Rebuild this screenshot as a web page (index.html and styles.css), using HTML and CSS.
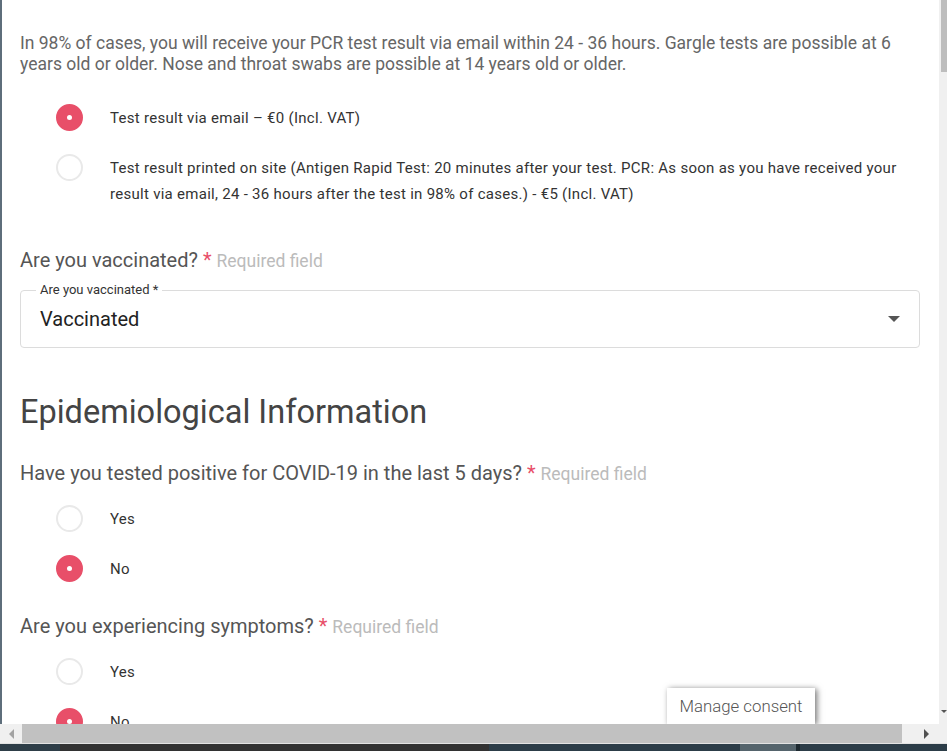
FILE: index.html
```html
<!DOCTYPE html>
<html lang="en">
<head>
    <meta charset="UTF-8">
    <meta name="viewport" content="width=device-width, initial-scale=1.0">
    <title>Test Booking</title>
    <link rel="stylesheet" href="styles.css">
</head>
<body>
    <div class="window">
        <div class="viewport">
            <div class="page">
                <p class="intro">In 98% of cases, you will receive your PCR test result via email within 24 - 36 hours. Gargle tests are possible at 6 years old or older. Nose and throat swabs are possible at 14 years old or older.</p>

                <div class="options first">
                    <div class="option">
                        <span class="radio checked"></span>
                        <span class="option-text">Test result via email &ndash; &euro;0 (Incl. VAT)</span>
                    </div>
                    <div class="option">
                        <span class="radio"></span>
                        <span class="option-text">Test result printed on site (Antigen Rapid Test: 20 minutes after your test. PCR: As soon as you have received your result via email, 24 - 36 hours after the test in 98% of cases.) - &euro;5 (Incl. VAT)</span>
                    </div>
                </div>

                <div class="question spaced">Are you vaccinated? <span class="star">*</span> <span class="required">Required field</span></div>
                <div class="select">
                    <span class="select-label">Are you vaccinated *</span>
                    <span class="select-value">Vaccinated</span>
                    <span class="select-arrow"></span>
                </div>

                <h2 class="section-title">Epidemiological Information</h2>

                <div class="question">Have you tested positive for COVID-19 in the last 5 days? <span class="star">*</span> <span class="required">Required field</span></div>
                <div class="options">
                    <div class="option">
                        <span class="radio"></span>
                        <span class="option-text">Yes</span>
                    </div>
                    <div class="option">
                        <span class="radio checked"></span>
                        <span class="option-text">No</span>
                    </div>
                </div>

                <div class="question next">Are you experiencing symptoms? <span class="star">*</span> <span class="required">Required field</span></div>
                <div class="options">
                    <div class="option">
                        <span class="radio"></span>
                        <span class="option-text">Yes</span>
                    </div>
                    <div class="option">
                        <span class="radio checked"></span>
                        <span class="option-text">No</span>
                    </div>
                </div>
            </div>

            <div class="vscroll">
                <div class="vthumb"></div>
                <span class="vdown"></span>
            </div>

            <button class="consent">Manage consent</button>
        </div>

        <div class="hscroll">
            <span class="harrow left"></span>
            <div class="hthumb"></div>
            <span class="harrow right"></span>
            <span class="corner"></span>
        </div>

        <div class="taskbar">
            <span class="tb tb-a"></span>
            <span class="tb tb-b"></span>
            <span class="tb tb-c"></span>
            <span class="tb tb-d"></span>
            <span class="tb tb-e"></span>
            <span class="tb tb-c grow"></span>
        </div>
    </div>
</body>
</html>
```

FILE: styles.css
```css
html, body {
    margin: 0;
    padding: 0;
    overflow: hidden;
    background: #fff;
}
body {
    font-family: Roboto, "Liberation Sans", sans-serif;
    color: #333;
}
.window {
    width: 947px;
    height: 751px;
    display: flex;
    flex-direction: column;
}
.viewport {
    position: relative;
    height: 724px;
    display: flex;
    border-left: 2px solid #5e6e7b;
    overflow: hidden;
}
.page {
    flex: 1;
    padding: 33px 19px 0 18px;
    overflow: hidden;
}
.intro {
    margin: 0;
    font-size: 17.5px;
    line-height: 21px;
    color: #666;
}
.options {
    margin-top: 8px;
}
.options.first {
    margin-top: 18px;
}
.option {
    display: grid;
    grid-template-columns: 90px 1fr;
    padding: 12px 0;
}
.radio {
    box-sizing: border-box;
    width: 27px;
    height: 27px;
    margin: -1px 0 0 36px;
    border-radius: 50%;
    border: 2px solid #e9e9e9;
    background: #fff;
    display: flex;
    align-items: center;
    justify-content: center;
}
.radio.checked {
    border-color: #e84f69;
    background: #e84f69;
}
.radio.checked::after {
    content: "";
    width: 5px;
    height: 5px;
    border-radius: 50%;
    background: #fff;
}
.option-text {
    font-size: 15px;
    line-height: 26px;
    letter-spacing: 0.28px;
    color: #333;
}
.question {
    font-size: 20px;
    line-height: 24px;
    color: #555;
    margin-top: 20px;
}
.question.spaced {
    margin-top: 29px;
}
.star {
    color: #e84f69;
}
.required {
    font-size: 17.5px;
    color: #bbb;
}
.select {
    position: relative;
    box-sizing: border-box;
    height: 58px;
    margin-top: 17px;
    border: 1px solid #dcdcdc;
    border-radius: 4px;
    display: flex;
    align-items: center;
    padding: 0 19px;
}
.select-label {
    position: absolute;
    top: -9px;
    left: 15px;
    padding: 0 4px;
    background: #fff;
    font-size: 13px;
    line-height: 15px;
    color: #333;
}
.select-value {
    flex: 1;
    font-size: 20px;
    color: #222;
}
.select-arrow {
    width: 0;
    height: 0;
    border-left: 6px solid transparent;
    border-right: 6px solid transparent;
    border-top: 6px solid #555;
}
.section-title {
    margin: 44px 0 0;
    font-size: 32.5px;
    line-height: 40px;
    font-weight: 400;
    color: #444;
}
.section-title + .question {
    margin-top: 29px;
}
.vscroll {
    width: 8px;
    background: #f0f0f0;
    position: relative;
    display: flex;
    flex-direction: column;
    align-items: flex-end;
}
.vthumb {
    width: 6px;
    height: 72px;
    background: #bdbdbd;
}
.vdown {
    position: absolute;
    bottom: 11px;
    right: 0;
    border-left: 3px solid transparent;
    border-right: 3px solid transparent;
    border-top: 3px solid #555;
}
.consent {
    position: absolute;
    right: 132px;
    bottom: 0;
    width: 148px;
    height: 36px;
    padding: 0;
    border: none;
    background: #fff;
    font-family: Roboto, "Liberation Sans", sans-serif;
    font-size: 16.8px;
    font-weight: 300;
    color: #555;
    text-align: center;
    box-shadow: 2px 1px 6px rgba(0, 0, 0, 0.55);
}
.hscroll {
    height: 19px;
    display: flex;
    align-items: stretch;
    background: #f0f0f0;
}
.harrow {
    width: 22px;
    display: flex;
    align-items: center;
    justify-content: center;
}
.harrow.left::before {
    content: "";
    border-top: 5px solid transparent;
    border-bottom: 5px solid transparent;
    border-right: 5px solid #a3a3a3;
}
.harrow.right {
    width: 37px;
    padding-left: 12px;
    box-sizing: border-box;
}
.harrow.right::before {
    content: "";
    border-top: 5px solid transparent;
    border-bottom: 5px solid transparent;
    border-left: 5px solid #505050;
}
.hthumb {
    width: 880px;
    background: #c1c1c1;
}
.corner {
    flex: 1;
}
.taskbar {
    flex: 1;
    display: flex;
    border-top: 1px solid #e3e3e3;
}
.tb {
    display: block;
}
.tb-a {
    width: 60px;
    background: #2e3e48;
}
.tb-b {
    width: 429px;
    background: #323232;
}
.tb-c {
    width: 251px;
    background: #2c3d48;
}
.tb-d {
    width: 56px;
    background: #55646c;
}
.tb-e {
    width: 4px;
    background: #1e2a31;
}
.grow {
    flex: 1;
}
```
